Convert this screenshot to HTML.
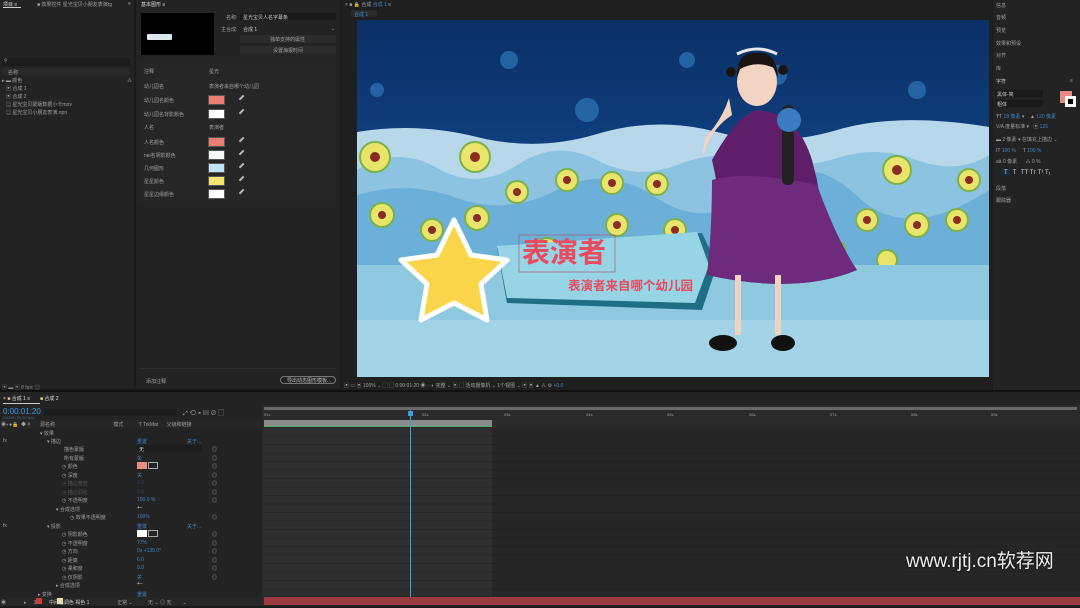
<!DOCTYPE html>
<html><head><meta charset="utf-8"><style>
*{margin:0;padding:0;box-sizing:border-box}
body{width:1080px;height:608px;background:#1b1b1b;position:relative;overflow:hidden;font-family:"Liberation Sans","Noto Sans CJK SC",sans-serif;font-size:5px;color:#9a9a9a}
.a{position:absolute}
.p{position:absolute;background:#232323}
.t{position:absolute;white-space:nowrap;font-size:5px;color:#a0a0a0}
.sw{position:absolute;width:17px;height:10px;border:1px solid #555}
.ed{position:absolute;width:6px;height:6px;border-left:2px solid #bbb;transform:rotate(45deg)}
.blue{color:#3d86c6}
</style></head><body>
<div class="p" style="left:0;top:0;width:134px;height:388px"></div>
<div class="t" style="left:3px;top:1px;color:#ddd">项目 ≡</div>
<div class="a" style="left:3px;top:7px;width:18px;height:1px;background:#ccc"></div>
<div class="t" style="left:37px;top:1px">■ 效果控件 星光宝贝小朋友表演tg</div>
<div class="t" style="left:128px;top:1px;color:#ccc">»</div>
<div class="a" style="left:2px;top:58px;width:128px;height:8px;background:#1c1c1c"></div>
<div class="t" style="left:4px;top:58px">⚲</div>
<div class="a" style="left:2px;top:68px;width:128px;height:7px;background:#2a2a2a"></div>
<div class="t" style="left:8px;top:69px">名称</div>
<div class="t" style="left:2px;top:77px">▸ ▬ 颜色</div>
<div class="t" style="left:6px;top:85px">▣ 合成 1</div>
<div class="t" style="left:6px;top:93px">▣ 合成 2</div>
<div class="t" style="left:6px;top:101px">▤ 星光宝贝蒙版数据小卡mov</div>
<div class="t" style="left:6px;top:109px">▤ 星光宝贝小朋友表演.npn</div>
<div class="t" style="left:127px;top:77px">⁂</div>
<div class="t" style="left:2px;top:384px;color:#888">▣ ▬ ▣ 8 bpc ▤</div>

<div class="p" style="left:136px;top:0;width:204px;height:388px"></div>
<div class="t" style="left:141px;top:1px;color:#ddd">基本图形 ≡</div>
<div class="a" style="left:141px;top:13px;width:73px;height:42px;background:#000"></div>
<div class="a" style="left:147px;top:34px;width:25px;height:6px;background:#dde8ee;border-radius:1px"></div>
<div class="t" style="left:226px;top:14px">名称:</div>
<div class="a" style="left:240px;top:13px;width:96px;height:7px;background:#1a1a1a"></div>
<div class="t" style="left:243px;top:14px;color:#ccc">星光宝贝人名字幕条</div>
<div class="t" style="left:221px;top:26px">主合成:</div>
<div class="t" style="left:243px;top:26px;color:#ccc">合成 1</div><div class="t" style="left:331px;top:26px">⌄</div>
<div class="a" style="left:240px;top:35px;width:96px;height:8px;background:#2b2b2b"></div>
<div class="t" style="left:270px;top:36px">独单支持的属性</div>
<div class="a" style="left:240px;top:46px;width:96px;height:8px;background:#2b2b2b"></div>
<div class="t" style="left:273px;top:47px">设置海报时间</div>
<div class="a" style="left:140px;top:62px;width:196px;height:140px;background:#262626"></div>
<div class="t" style="left:144px;top:68px">注释</div><div class="t" style="left:209px;top:68px">星光</div>
<div class="t" style="left:144px;top:83px">幼儿园名</div><div class="t" style="left:209px;top:83px">表演者来自哪个幼儿园</div>
<div class="t" style="left:144px;top:97px">幼儿园名颜色</div><div class="sw" style="left:208px;top:95px;background:#ea7e72"></div><div class="ed" style="left:240px;top:96px"></div>
<div class="t" style="left:144px;top:111px">幼儿园名背影颜色</div><div class="sw" style="left:208px;top:109px;background:#fff"></div><div class="ed" style="left:240px;top:110px"></div>
<div class="t" style="left:144px;top:124px">人名</div><div class="t" style="left:209px;top:124px">表演者</div>
<div class="t" style="left:144px;top:139px">人名颜色</div><div class="sw" style="left:208px;top:137px;background:#ea7e72"></div><div class="ed" style="left:240px;top:138px"></div>
<div class="t" style="left:144px;top:152px">nei名阴影颜色</div><div class="sw" style="left:208px;top:150px;background:#f4f8fb"></div><div class="ed" style="left:240px;top:151px"></div>
<div class="t" style="left:144px;top:165px">几何图形</div><div class="sw" style="left:208px;top:163px;background:#bde3f5"></div><div class="ed" style="left:240px;top:164px"></div>
<div class="t" style="left:144px;top:178px">星星颜色</div><div class="sw" style="left:208px;top:176px;background:#f5e56e"></div><div class="ed" style="left:240px;top:177px"></div>
<div class="t" style="left:144px;top:191px">星星边缘颜色</div><div class="sw" style="left:208px;top:189px;background:#fff"></div><div class="ed" style="left:240px;top:190px"></div>
<div class="a" style="left:140px;top:368px;width:196px;height:1px;background:#2e2e2e"></div>
<div class="t" style="left:146px;top:378px">添加注释</div>
<div class="a" style="left:280px;top:376px;width:56px;height:8px;border:1px solid #777;border-radius:4px"></div>
<div class="t" style="left:287px;top:377px;color:#bbb">导出动态图形模板...</div>

<div class="p" style="left:342px;top:0;width:650px;height:390px;background:#1f1f1f"></div>
<div class="t" style="left:345px;top:1px">× ■ 🔒 合成 <span class="blue">合成 1</span> ≡</div>
<div class="a" style="left:351px;top:10px;width:26px;height:7px;background:#2a2a2a"></div>
<div class="t" style="left:354px;top:11px"><span class="blue">合成 1</span></div>
<div class="a" style="left:357px;top:20px;width:632px;height:357px;overflow:hidden;background:linear-gradient(#0b2f66,#134a8e 60%,#1d5ea6)">
 <svg width="632" height="357" viewBox="0 0 632 357" style="position:absolute;left:0;top:0">
  <g fill="#3688cc" opacity=".55">
   <circle cx="20" cy="70" r="7"/><circle cx="152" cy="40" r="9"/><circle cx="230" cy="90" r="12"/><circle cx="330" cy="40" r="8"/><circle cx="420" cy="55" r="10"/><circle cx="560" cy="70" r="9"/>
  </g>
  <path d="M0 112 Q60 102 120 117 T240 114 T360 112 T480 110 T632 107 V357 H0Z" fill="#b7d8ea"/>
  <path d="M0 150 Q40 125 80 148 T160 145 T240 140 T320 145 T400 140 T480 138 T560 140 T632 135 V240 H0Z" fill="#8cc3e0"/>
  <path d="M0 175 Q50 160 100 178 T200 170 T300 178 T400 170 T500 176 T632 170 V245 H0Z" fill="#6cb0d9"/>
  <g fill="#e9e46a" stroke="#7cb04a" stroke-width="2">
   <circle cx="18" cy="137" r="15"/><circle cx="118" cy="137" r="15"/><circle cx="25" cy="195" r="12"/><circle cx="75" cy="210" r="11"/><circle cx="120" cy="198" r="12"/><circle cx="160" cy="172" r="11"/><circle cx="210" cy="160" r="11"/><circle cx="255" cy="163" r="11"/><circle cx="300" cy="164" r="11"/><circle cx="190" cy="230" r="12"/><circle cx="260" cy="205" r="11"/><circle cx="318" cy="210" r="11"/><circle cx="540" cy="150" r="14"/><circle cx="510" cy="200" r="11"/><circle cx="560" cy="205" r="12"/><circle cx="600" cy="200" r="11"/><circle cx="530" cy="240" r="10"/><circle cx="478" cy="230" r="10"/><circle cx="612" cy="160" r="11"/>
  </g>
  <g fill="#8a2b24">
   <circle cx="18" cy="137" r="5"/><circle cx="118" cy="137" r="5"/><circle cx="25" cy="195" r="4"/><circle cx="75" cy="210" r="4"/><circle cx="120" cy="198" r="4"/><circle cx="160" cy="172" r="4"/><circle cx="210" cy="160" r="4"/><circle cx="255" cy="163" r="4"/><circle cx="300" cy="164" r="4"/><circle cx="190" cy="230" r="4"/><circle cx="260" cy="205" r="4"/><circle cx="318" cy="210" r="4"/><circle cx="540" cy="150" r="5"/><circle cx="510" cy="200" r="4"/><circle cx="560" cy="205" r="4"/><circle cx="600" cy="200" r="4"/><circle cx="612" cy="160" r="4"/>
  </g>
  <path d="M0 245 H632 V357 H0Z" fill="#8ec9e0"/>
  <path d="M0 300 H632 V357 H0Z" fill="#a3d3e6"/>
  <path d="M140 228 L345 213 L360 245 L345 290 L150 283 Z" fill="#1f6e86"/>
  <path d="M140 226 L340 212 L352 245 L338 283 L150 278 Z" fill="#96d4e6"/>
  <path d="M97 200 L114 235 L150 240 L124 264 L130 300 L97 283 L64 300 L70 264 L44 240 L80 235 Z" fill="#fbd549" stroke="#fff" stroke-width="5" stroke-linejoin="round"/>
  <ellipse cx="400" cy="62" rx="20" ry="24" fill="#f3d4c2"/>
  <path d="M380 58 Q380 30 400 33 Q420 31 421 58 L417 48 Q400 40 383 49Z" fill="#1c1410"/>
  <circle cx="374" cy="52" r="5" fill="#1c1410"/><circle cx="426" cy="50" r="5" fill="#1c1410"/>
  <path d="M380 34 Q400 24 420 34" stroke="#e8e8e8" stroke-width="3" fill="none"/>
  <path d="M345 140 Q352 110 375 95 L372 78 Q365 100 348 118Z" fill="#f3d4c2"/>
  <path d="M355 140 Q380 95 400 90 Q440 92 455 140 L460 160 Q470 230 500 250 Q440 275 350 255 Q370 200 355 140Z" fill="#5e1e6a"/>
  <path d="M355 160 Q390 150 460 165 Q480 220 500 250 Q440 275 350 255 Q355 210 355 160Z" fill="#6e2a7c"/>
  <rect x="425" y="85" width="12" height="80" rx="5" fill="#222"/>
  <circle cx="432" cy="100" r="12" fill="#3a7cc0"/>
  <rect x="378" y="255" width="6" height="60" fill="#f0d2c0"/><rect x="418" y="255" width="6" height="60" fill="#f0d2c0"/>
  <ellipse cx="366" cy="323" rx="14" ry="8" fill="#111"/><ellipse cx="426" cy="323" rx="12" ry="8" fill="#111"/>
  <text x="165" y="242" font-family="Liberation Sans,Noto Sans CJK SC,sans-serif" font-size="28" font-weight="bold" fill="#e84b5d">表演者</text>
  <rect x="162" y="215" width="96" height="37" fill="none" stroke="#a85060" stroke-width=".6"/>
  <text x="211" y="270" font-family="Liberation Sans,Noto Sans CJK SC,sans-serif" font-size="12.5" font-weight="bold" fill="#e84b5d">表演者来自哪个幼儿园</text>
 </svg>
</div>
<div class="t" style="left:344px;top:382px">▣ ▭ ▣ 100% ⌄ ▢ ▢ 0:00:01:20 ◉ ◌ ◐ 完整 ⌄ ▣ ▢ 活动摄像机 ⌄ 1个视图 ⌄ ▣ ▣ ▲ ⁂ ⚙ <span class="blue">+0.0</span></div>

<div class="p" style="left:993px;top:0;width:87px;height:390px"></div>
<div class="t" style="left:996px;top:2px">信息</div>
<div class="t" style="left:996px;top:14px">音频</div>
<div class="t" style="left:996px;top:27px">预览</div>
<div class="t" style="left:996px;top:40px">效果和预设</div>
<div class="t" style="left:996px;top:52px">对齐</div>
<div class="t" style="left:996px;top:65px">库</div>
<div class="t" style="left:996px;top:78px;color:#ccc">字符</div><div class="t" style="left:1070px;top:78px">≡</div>
<div class="a" style="left:995px;top:90px;width:48px;height:7px;background:#1a1a1a"></div><div class="t" style="left:997px;top:91px;color:#ccc">黑体-简</div>
<div class="a" style="left:995px;top:100px;width:48px;height:7px;background:#1a1a1a"></div><div class="t" style="left:997px;top:101px;color:#ccc">粗体</div>
<div class="a" style="left:1060px;top:91px;width:12px;height:12px;background:#ea8c86"></div>
<div class="a" style="left:1065px;top:96px;width:11px;height:11px;background:#fff;border:3px solid #fff"><div style="width:5px;height:5px;background:#000"></div></div>
<div class="t" style="left:996px;top:113px">₸T <span class="blue">18 像素</span> ▾ &nbsp;&nbsp;&nbsp;▲ <span class="blue">120 像素</span></div>
<div class="t" style="left:996px;top:123px">V/A 度量标准 ▾ &nbsp;&nbsp;▣ <span class="blue">126</span></div>
<div class="t" style="left:996px;top:136px">▬ 2 像素 ▾ 在填充上描边 ⌄</div>
<div class="t" style="left:996px;top:148px">IT <span class="blue">100 %</span> &nbsp;&nbsp;&nbsp;&nbsp;T <span class="blue">100 %</span></div>
<div class="t" style="left:996px;top:158px">aä 0 像素 &nbsp;&nbsp;&nbsp;&nbsp;&nbsp;⁂ 0 %</div>
<div class="a" style="left:1002px;top:169px;width:8px;height:7px;background:#15303c"></div>
<div class="t" style="left:1004px;top:170px;color:#ddd;font-size:6px">T &nbsp; T &nbsp; TT Tт T¹ T₁</div>
<div class="t" style="left:996px;top:185px">段落</div>
<div class="t" style="left:996px;top:197px">跟踪器</div>

<div class="a" style="left:0;top:390px;width:1080px;height:2px;background:#111"></div>
<div class="p" style="left:0;top:392px;width:1080px;height:216px;background:#232323"></div>
<div class="t" style="left:3px;top:395px;color:#ddd">× <span style="color:#e9c88a">■</span> 合成 1 ≡ &nbsp;&nbsp;&nbsp;&nbsp;&nbsp;&nbsp;<span style="color:#e9e08a">■</span> 合成 2</div>
<div class="a" style="left:3px;top:403px;width:37px;height:1px;background:#ccc"></div>
<div class="t" style="left:3px;top:407px;color:#3d9be0;font-size:8px">0:00:01:20</div>
<div class="t" style="left:3px;top:415px;color:#3d6a90;font-size:4px">00045 (25.00 fps)</div>
<div class="a" style="left:44px;top:409px;width:132px;height:7px;background:#1c1c1c"></div>
<div class="t" style="left:183px;top:408px;color:#aaa;font-size:6px">⤢ ⟲ ◓ ▤ ⊘ ▢</div>
<div class="a" style="left:0;top:420px;width:263px;height:8px;background:#262626"></div>
<div class="t" style="left:1px;top:421px">◉◐●🔒 &nbsp;◆ # &nbsp;&nbsp;&nbsp;&nbsp;&nbsp;&nbsp;源名称 &nbsp;&nbsp;&nbsp;&nbsp;&nbsp;&nbsp;&nbsp;&nbsp;&nbsp;&nbsp;&nbsp;&nbsp;&nbsp;&nbsp;&nbsp;&nbsp;&nbsp;&nbsp;&nbsp;&nbsp;&nbsp;&nbsp;&nbsp;&nbsp;&nbsp;&nbsp;&nbsp;&nbsp;&nbsp;&nbsp;&nbsp;&nbsp;&nbsp;&nbsp;&nbsp;&nbsp;&nbsp;&nbsp;&nbsp;&nbsp;&nbsp;模式 &nbsp;&nbsp;&nbsp;&nbsp;&nbsp;&nbsp;&nbsp;&nbsp;&nbsp;&nbsp;T TrkMat &nbsp;&nbsp;&nbsp;&nbsp;&nbsp;父级和链接</div>
<div class="t" style="left:40px;top:430px">▾ 效果</div>
<div class="t" style="left:3px;top:438px">fx</div><div class="t" style="left:47px;top:438px">▾ 描边</div><div class="t blue" style="left:137px;top:438px">重置</div><div class="t blue" style="left:187px;top:438px">关于...</div>
<div class="t" style="left:64px;top:446px">描色蒙版</div><div class="a" style="left:137px;top:445px;width:65px;height:6px;background:#1c1c1c"></div><div class="t" style="left:139px;top:446px;color:#ccc">无</div>
<div class="t" style="left:64px;top:455px">所有蒙版</div><div class="t blue" style="left:137px;top:455px">关</div>
<div class="t" style="left:62px;top:463px">◷ 颜色</div><div class="a" style="left:137px;top:462px;width:10px;height:7px;background:#e88c86"></div><div class="a" style="left:148px;top:462px;width:10px;height:7px;border:1px solid #aaa"></div>
<div class="t" style="left:62px;top:472px">◷ 深度</div><div class="t blue" style="left:137px;top:472px">关</div>
<div class="t" style="left:62px;top:480px;color:#555">◷ 描边宽度</div><div class="t" style="left:137px;top:480px;color:#345">0.0</div>
<div class="t" style="left:62px;top:489px;color:#555">◷ 描边羽化</div><div class="t" style="left:137px;top:489px;color:#345">0.0</div>
<div class="t" style="left:62px;top:497px">◷ 不透明度</div><div class="t blue" style="left:137px;top:497px">100.0 %</div>
<div class="t" style="left:56px;top:506px">▾ 合成选项</div><div class="t" style="left:137px;top:505px;color:#ddd">+−</div>
<div class="t" style="left:70px;top:514px">◷ 效果不透明度</div><div class="t blue" style="left:137px;top:514px">100%</div>
<div class="t" style="left:3px;top:523px">fx</div><div class="t" style="left:47px;top:523px">▾ 投影</div><div class="t blue" style="left:137px;top:523px">重置</div><div class="t blue" style="left:187px;top:523px">关于...</div>
<div class="t" style="left:62px;top:531px">◷ 阴影颜色</div><div class="a" style="left:137px;top:530px;width:10px;height:7px;background:#fff"></div><div class="a" style="left:148px;top:530px;width:10px;height:7px;border:1px solid #aaa"></div>
<div class="t" style="left:62px;top:540px">◷ 不透明度</div><div class="t blue" style="left:137px;top:540px">77%</div>
<div class="t" style="left:62px;top:548px">◷ 方向</div><div class="t blue" style="left:137px;top:548px">0x +135.0°</div>
<div class="t" style="left:62px;top:557px">◷ 距离</div><div class="t blue" style="left:137px;top:557px">6.0</div>
<div class="t" style="left:62px;top:565px">◷ 柔和度</div><div class="t blue" style="left:137px;top:565px">0.0</div>
<div class="t" style="left:62px;top:574px">◷ 仅阴影</div><div class="t blue" style="left:137px;top:574px">关</div>
<div class="t" style="left:56px;top:582px">▸ 合成选项</div><div class="t" style="left:137px;top:581px;color:#ddd">+−</div>
<div class="t" style="left:38px;top:591px">▸ 变换</div><div class="t blue" style="left:137px;top:591px">重置</div>
<div class="t" style="left:212px;top:446px">◎</div><div class="t" style="left:212px;top:455px">◎</div><div class="t" style="left:212px;top:463px">◎</div><div class="t" style="left:212px;top:472px">◎</div><div class="t" style="left:212px;top:480px">◎</div><div class="t" style="left:212px;top:489px">◎</div><div class="t" style="left:212px;top:497px">◎</div><div class="t" style="left:212px;top:514px">◎</div><div class="t" style="left:212px;top:531px">◎</div><div class="t" style="left:212px;top:540px">◎</div><div class="t" style="left:212px;top:548px">◎</div><div class="t" style="left:212px;top:557px">◎</div><div class="t" style="left:212px;top:565px">◎</div><div class="t" style="left:212px;top:574px">◎</div>
<div class="a" style="left:0;top:597px;width:263px;height:9px;background:#262626"></div>
<div class="a" style="left:36px;top:598px;width:6px;height:6px;background:#d23a3a"></div>
<div class="a" style="left:57px;top:598px;width:6px;height:6px;background:#f2e69a"></div>
<div class="t" style="left:1px;top:599px">◉ &nbsp;&nbsp;&nbsp;&nbsp;&nbsp;&nbsp;&nbsp;&nbsp;&nbsp;&nbsp;&nbsp;&nbsp;▸ &nbsp;&nbsp;&nbsp;&nbsp;3 &nbsp;&nbsp;&nbsp;&nbsp;&nbsp;&nbsp;&nbsp;&nbsp;<span style="color:#ccc">中间色调色 褐色 1</span> &nbsp;&nbsp;&nbsp;&nbsp;&nbsp;&nbsp;&nbsp;&nbsp;&nbsp;&nbsp;&nbsp;&nbsp;&nbsp;&nbsp;&nbsp;&nbsp;&nbsp;&nbsp;&nbsp;正常 ⌄ &nbsp;&nbsp;&nbsp;&nbsp;&nbsp;&nbsp;&nbsp;&nbsp;&nbsp;&nbsp;无 ⌄ ◎ 无 &nbsp;&nbsp;&nbsp;&nbsp;&nbsp;&nbsp;&nbsp;⌄</div>
<div class="a" style="left:262px;top:405px;width:818px;height:203px;background:#2a2a2a"></div>
<div class="a" style="left:264px;top:407px;width:813px;height:3px;background:#6a6a6a"></div>
<div class="t" style="left:264px;top:412px;font-size:4px">01s</div>
<div class="t" style="left:422px;top:412px;font-size:4px">02s</div>
<div class="t" style="left:504px;top:412px;font-size:4px">03s</div>
<div class="t" style="left:586px;top:412px;font-size:4px">04s</div>
<div class="t" style="left:667px;top:412px;font-size:4px">05s</div>
<div class="t" style="left:749px;top:412px;font-size:4px">06s</div>
<div class="t" style="left:830px;top:412px;font-size:4px">07s</div>
<div class="t" style="left:911px;top:412px;font-size:4px">08s</div>
<div class="t" style="left:991px;top:412px;font-size:4px">09s</div>
<div class="a" style="left:264px;top:420px;width:228px;height:6px;background:#8a8a8a"></div>
<div class="a" style="left:264px;top:426px;width:228px;height:1px;background:#4fae6a"></div>
<div class="a" style="left:264px;top:428px;width:228px;height:168px;background:repeating-linear-gradient(#2e2e2e 0 7.5px,#262626 7.5px 8.5px)"></div>
<div class="a" style="left:492px;top:428px;width:588px;height:168px;background:repeating-linear-gradient(#262626 0 7.5px,#222 7.5px 8.5px)"></div>
<div class="a" style="left:410px;top:410px;width:1px;height:188px;background:#3d9be0"></div>
<div class="a" style="left:408px;top:411px;width:5px;height:5px;background:#3d9be0"></div>
<div class="a" style="left:264px;top:597px;width:816px;height:8px;background:#9b3a40"></div>
<div class="a" style="left:0;top:606px;width:1080px;height:2px;background:#1a1a1a"></div>
<div class="t" style="left:906px;top:546px;font-size:19px;color:#fff;opacity:.92;text-shadow:0 0 2px #000">www.rjtj.cn软荐网</div>
</body></html>
